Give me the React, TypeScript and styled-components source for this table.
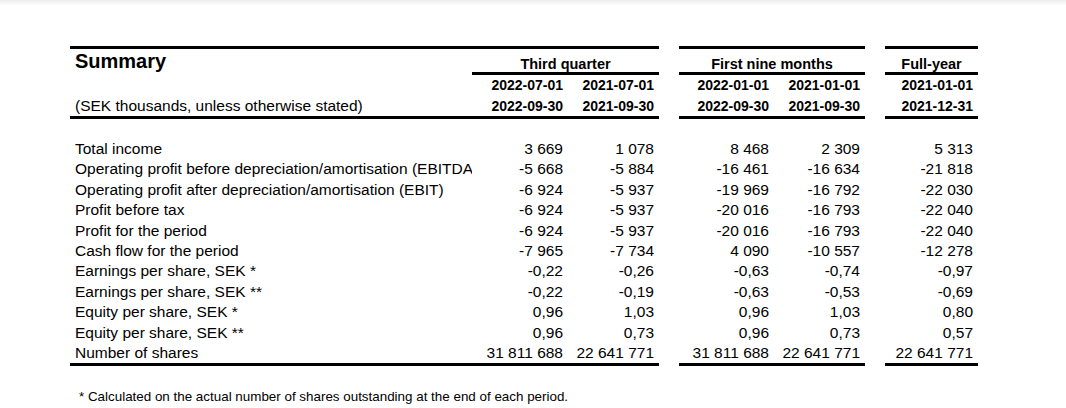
import React from 'react';
import styled, { createGlobalStyle } from 'styled-components';

const GlobalStyle = createGlobalStyle`
  html, body {
    margin: 0;
    padding: 0;
    background: linear-gradient(to bottom, rgba(0, 0, 0, 0.07), rgba(0, 0, 0, 0) 6px), #fff;
  }
  body {
    font-family: 'Liberation Sans', Arial, sans-serif;
    color: #000;
  }
`;

type Row = { label: string; values: string[] };

const rows: Row[] = [
  { label: 'Total income', values: ['3 669', '1 078', '8 468', '2 309', '5 313'] },
  {
    label: 'Operating profit before depreciation/amortisation (EBITDA)',
    values: ['-5 668', '-5 884', '-16 461', '-16 634', '-21 818'],
  },
  {
    label: 'Operating profit after depreciation/amortisation (EBIT)',
    values: ['-6 924', '-5 937', '-19 969', '-16 792', '-22 030'],
  },
  { label: 'Profit before tax', values: ['-6 924', '-5 937', '-20 016', '-16 793', '-22 040'] },
  { label: 'Profit for the period', values: ['-6 924', '-5 937', '-20 016', '-16 793', '-22 040'] },
  { label: 'Cash flow for the period', values: ['-7 965', '-7 734', '4 090', '-10 557', '-12 278'] },
  { label: 'Earnings per share, SEK *', values: ['-0,22', '-0,26', '-0,63', '-0,74', '-0,97'] },
  { label: 'Earnings per share, SEK **', values: ['-0,22', '-0,19', '-0,63', '-0,53', '-0,69'] },
  { label: 'Equity per share, SEK *', values: ['0,96', '1,03', '0,96', '1,03', '0,80'] },
  { label: 'Equity per share, SEK **', values: ['0,96', '0,73', '0,96', '0,73', '0,57'] },
  {
    label: 'Number of shares',
    values: ['31 811 688', '22 641 771', '31 811 688', '22 641 771', '22 641 771'],
  },
];

function App() {
  return (
    <Page>
      <GlobalStyle />
      <Sheet>
        <Heading>Summary</Heading>
        <GroupTitle $span={2}>Third quarter</GroupTitle>
        <Gap />
        <GroupTitle $span={2}>First nine months</GroupTitle>
        <Gap />
        <GroupTitle $span={1}>Full-year</GroupTitle>

        <Blank />
        <DateCell>2022-07-01</DateCell>
        <DateCell>2021-07-01</DateCell>
        <Gap />
        <DateCell>2022-01-01</DateCell>
        <DateCell>2021-01-01</DateCell>
        <Gap />
        <DateCell>2021-01-01</DateCell>

        <Unit>(SEK thousands, unless otherwise stated)</Unit>
        <DateCell $ruled>2022-09-30</DateCell>
        <DateCell $ruled>2021-09-30</DateCell>
        <Gap />
        <DateCell $ruled>2022-09-30</DateCell>
        <DateCell $ruled>2021-09-30</DateCell>
        <Gap />
        <DateCell $ruled>2021-12-31</DateCell>

        <Spacer />

        {rows.map((row, i) => {
          const last = i === rows.length - 1;
          return (
            <React.Fragment key={row.label}>
              <Label $last={last}>{row.label}</Label>
              <Value $last={last}>{row.values[0]}</Value>
              <Value $last={last}>{row.values[1]}</Value>
              <Gap />
              <Value $last={last}>{row.values[2]}</Value>
              <Value $last={last}>{row.values[3]}</Value>
              <Gap />
              <Value $last={last}>{row.values[4]}</Value>
            </React.Fragment>
          );
        })}
      </Sheet>
      <Footnote>* Calculated on the actual number of shares outstanding at the end of each period.</Footnote>
    </Page>
  );
}
export default App;

const Page = styled.div`
  width: 1066px;
  height: 408px;
  padding-top: 46px;
  box-sizing: border-box;
  overflow: hidden;
`;

const Sheet = styled.div`
  display: grid;
  grid-template-columns: 402px 96px 91px 20px 95px 91px 20px 93px;
  margin-left: 70px;
  width: 908px;
`;

const Heading = styled.div`
  height: 29px;
  box-sizing: border-box;
  border-top: 3px solid #000;
  padding: 1px 0 0 5px;
  font-size: 20px;
  font-weight: 700;
  line-height: 22px;
`;

const GroupTitle = styled.div<{ $span: number }>`
  grid-column: span ${(p) => p.$span};
  height: 29px;
  box-sizing: border-box;
  border-top: 3px solid #000;
  border-bottom: 3px solid #000;
  display: flex;
  align-items: flex-end;
  justify-content: center;
  font-size: 14.5px;
  font-weight: 700;
  line-height: 16px;
`;

const Gap = styled.div``;

const Blank = styled.div``;

const DateCell = styled.div<{ $ruled?: boolean }>`
  height: ${(p) => (p.$ruled ? '23px' : '21px')};
  box-sizing: border-box;
  border-bottom: ${(p) => (p.$ruled ? '3px solid #000' : 'none')};
  padding-right: 5px;
  text-align: right;
  font-size: 14px;
  font-weight: 700;
  line-height: ${(p) => (p.$ruled ? '20px' : '21px')};
`;

const Unit = styled.div`
  height: 23px;
  box-sizing: border-box;
  border-bottom: 3px solid #000;
  padding-left: 5px;
  font-size: 15.5px;
  line-height: 19px;
`;

const Spacer = styled.div`
  grid-column: 1 / -1;
  height: 20px;
`;

const Label = styled.div<{ $last?: boolean }>`
  height: ${(p) => (p.$last ? '23.4px' : '20.4px')};
  box-sizing: border-box;
  border-bottom: ${(p) => (p.$last ? '3px solid #000' : 'none')};
  padding-left: 5px;
  font-size: 15.5px;
  line-height: 20.4px;
  white-space: nowrap;
  overflow: hidden;
`;

const Value = styled.div<{ $last?: boolean }>`
  height: ${(p) => (p.$last ? '23.4px' : '20.4px')};
  box-sizing: border-box;
  border-bottom: ${(p) => (p.$last ? '3px solid #000' : 'none')};
  padding-right: 5px;
  text-align: right;
  font-size: 15.5px;
  line-height: 20.4px;
  white-space: nowrap;
`;

const Footnote = styled.div`
  margin: 23px 0 0 79px;
  font-size: 13.4px;
  line-height: 16px;
`;
